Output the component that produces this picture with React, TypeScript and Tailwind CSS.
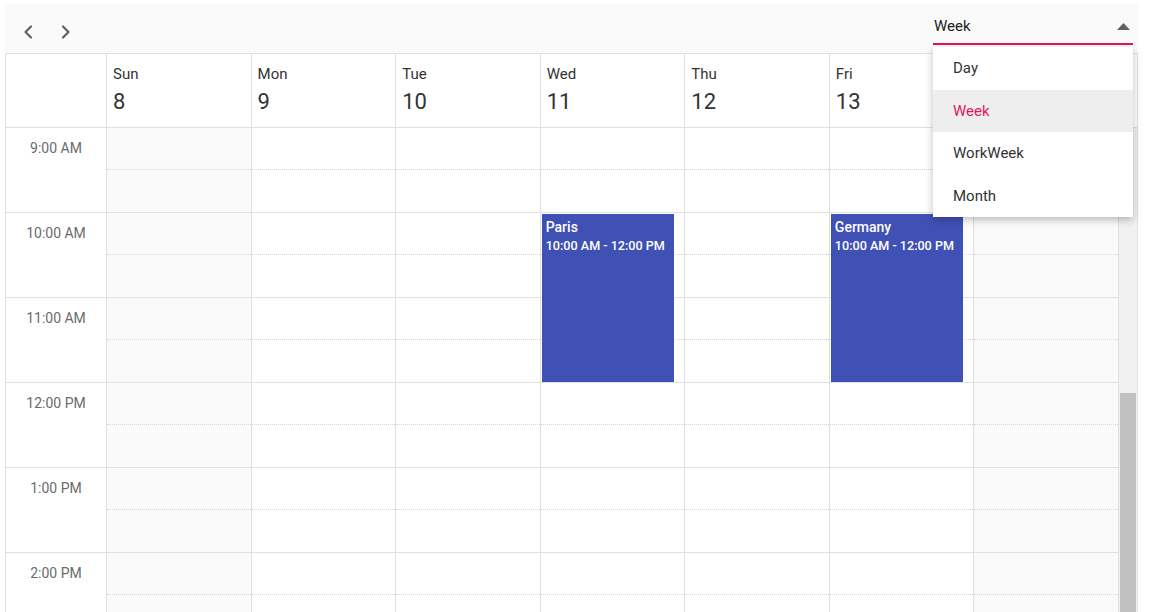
import React from "react";

const days = [
  { name: "Sun", date: 8, off: true },
  { name: "Mon", date: 9, off: false },
  { name: "Tue", date: 10, off: false },
  { name: "Wed", date: 11, off: false },
  { name: "Thu", date: 12, off: false },
  { name: "Fri", date: 13, off: false },
  { name: "Sat", date: 14, off: true },
];

const hours = ["9:00 AM", "10:00 AM", "11:00 AM", "12:00 PM", "1:00 PM", "2:00 PM"];

const events: Record<number, { title: string; time: string }> = {
  3: { title: "Paris", time: "10:00 AM - 12:00 PM" },
  5: { title: "Germany", time: "10:00 AM - 12:00 PM" },
};

function Chevron({ dir }: { dir: "left" | "right" }) {
  return (
    <svg width="12" height="16" viewBox="0 0 12 16" fill="none">
      <path
        d={dir === "left" ? "M9 2.5 L3.5 8 L9 13.5" : "M3 2.5 L8.5 8 L3 13.5"}
        stroke="#616161"
        strokeWidth="2.2"
        strokeLinecap="round"
        strokeLinejoin="round"
      />
    </svg>
  );
}

export default function App() {
  return (
    <div
      className="h-[612px] overflow-hidden bg-white pt-[4px] pl-[5px]"
      style={{ fontFamily: "Roboto, 'Noto Sans', sans-serif" }}
    >
      <div className="relative w-[1133px]">
        {/* Toolbar */}
        <div className="flex h-[50px] items-start justify-between border-b border-[#e0e0e0] bg-[#fafafa]">
          <div className="flex gap-[6px] pl-[7px] pt-[12px]">
            <button className="flex h-[32px] w-[32px] items-center justify-center">
              <Chevron dir="left" />
            </button>
            <button className="flex h-[32px] w-[32px] items-center justify-center">
              <Chevron dir="right" />
            </button>
          </div>
          <div className="mt-[8px] mr-[5px] flex h-[33px] w-[200px] items-center justify-between border-b-2 border-[#e3165b] pb-[3px]">
            <span className="pl-[1px] text-[15px] leading-[20px] text-[#212121]">Week</span>
            <svg width="13" height="7" viewBox="0 0 13 7" className="mr-[3px]">
              <path d="M0 7 L6.5 0 L13 7 Z" fill="#616161" />
            </svg>
          </div>
        </div>

        {/* Header */}
        <div className="flex h-[74px] border-b border-[#e0e0e0]">
          <div className="w-[102px] shrink-0 border-x border-[#e0e0e0]" />
          <div className="grid w-[1012px] shrink-0 grid-cols-7">
            {days.map((d) => (
              <div key={d.name} className="border-r border-[#e0e0e0] pl-[6px] pt-[10px] text-[#333333]">
                <div className="text-[15px] leading-[20px]">{d.name}</div>
                <div className="mt-[4px] text-[22px] leading-[28px]">{d.date}</div>
              </div>
            ))}
          </div>
          <div className="w-[19px] shrink-0 border-r border-[#e0e0e0]" />
        </div>

        {/* Body */}
        <div className="flex">
          <div className="w-[102px] shrink-0 border-x border-[#e0e0e0]">
            {hours.map((h) => (
              <div key={h} className="h-[85px] border-b border-[#e0e0e0] pt-[10px] text-center text-[14px] leading-[20px] text-[#6b6b6b]">
                {h}
              </div>
            ))}
          </div>
          <div className="grid w-[1012px] shrink-0 grid-cols-7">
            {days.map((d, i) => (
              <div
                key={d.name}
                className={`relative border-r border-[#e0e0e0] ${d.off ? "bg-[#fafafa]" : "bg-white"}`}
              >
                {hours.map((h) => (
                  <div key={h} className="flex h-[85px] flex-col border-b border-[#e0e0e0]">
                    <div className="h-[42px] border-b border-dotted border-[#d6d6d6]" />
                    <div className="flex-1" />
                  </div>
                ))}
                {events[i] && (
                  <div className="absolute top-[86px] left-[1px] right-[10px] h-[168px] bg-[#3f51b5] px-[4px] pt-[3px] text-white">
                    <div className="text-[14px] font-medium leading-[20px]">{events[i].title}</div>
                    <div className="text-[12.6px] font-medium leading-[18px]">{events[i].time}</div>
                  </div>
                )}
              </div>
            ))}
          </div>
          <div className="flex h-[510px] w-[19px] shrink-0 flex-col border-r border-[#e0e0e0] bg-[#f1f1f1]">
            <div className="ml-[1px] mt-[265px] h-[300px] w-[16px] bg-[#c1c1c1]" />
          </div>
        </div>

        {/* Dropdown popup */}
        <div className="absolute left-[928px] top-[43px] w-[200px] bg-white py-0 shadow-[0_3px_8px_rgba(0,0,0,0.25)]">
          {["Day", "Week", "WorkWeek", "Month"].map((v) => (
            <div
              key={v}
              className={`flex h-[42.5px] items-center pl-[20px] text-[15px] ${
                v === "Week" ? "bg-[#eeeeee] text-[#e3165b]" : "text-[#333333]"
              }`}
            >
              {v}
            </div>
          ))}
        </div>
      </div>
    </div>
  );
}
